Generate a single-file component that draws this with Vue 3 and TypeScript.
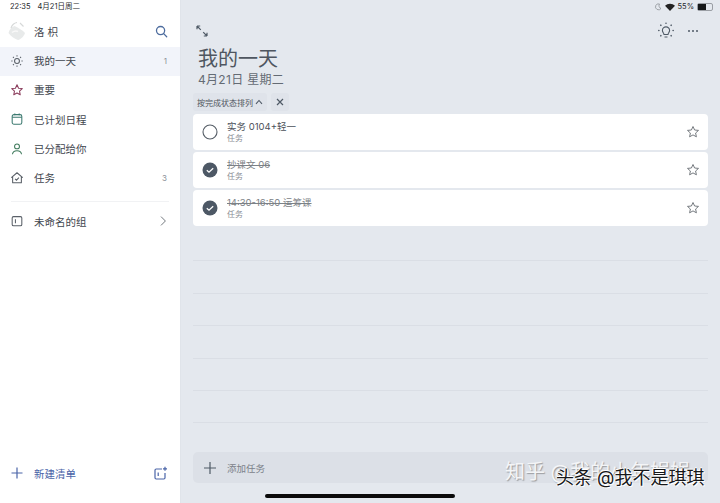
<template>
  <div class="page">
    <aside class="side">
      <div class="account">
        <svg class="avatar" width="20" height="22" viewBox="0 0 20 22" fill="none">
          <path d="M1.500 13c1-3.500 3-6 6-7 3 1.500 8 4 10.500 7-1 3-4 6.500-7 7-3-1-7-3.500-9.500-7z" fill="#e8eaea" />
          <path d="M4 8c1-3 3-5 6-5.500M13 3l3.500 3.500" stroke="#d6d8d8" stroke-width="1.100" />
          <path d="M5 12.500c2-1.500 4-2 6-1" stroke="#f8f8f8" stroke-width="1.500" />
        </svg>
        <span class="account-name">洛 枳</span>
        <svg class="search" width="13" height="13" viewBox="0 0 14 14" fill="none" stroke="#4d6c9e" stroke-width="1.400">
          <circle cx="6" cy="6" r="4.400" />
          <path d="M9.300 9.300 12.600 12.600" stroke-linecap="round" />
        </svg>
      </div>

      <div v-for="item in lists" :key="item.name" class="row" :class="{ active: item.active }">
        <svg class="row-icon" width="14" height="14" viewBox="0 0 16 16" fill="none" :stroke="item.color" stroke-width="1.200">
          <template v-if="item.icon === 'sun'">
            <circle cx="8" cy="8" r="2.800" />
            <path d="M8 1.500v1.400M8 13.100v1.400M1.500 8h1.400M13.100 8h1.400M3.400 3.400l1 1M11.600 11.600l1 1M3.400 12.600l1-1M11.600 4.400l1-1" />
          </template>
          <path v-else-if="item.icon === 'star'" d="M8 2l1.800 3.900 4.200.5-3.100 2.900.8 4.200L8 11.400l-3.700 2.100.8-4.200L2 6.400l4.200-.5z" stroke-linejoin="round" />
          <template v-else-if="item.icon === 'cal'">
            <rect x="2.500" y="3" width="11" height="11" rx="2" />
            <path d="M2.500 6h11M5.500 1.600v2M10.500 1.600v2" />
          </template>
          <template v-else-if="item.icon === 'user'">
            <circle cx="8" cy="5" r="2.800" />
            <path d="M2.800 14c.4-2.800 2.600-4 5.200-4s4.800 1.200 5.200 4" />
          </template>
          <template v-else>
            <path d="M1.500 7.500 8 2l6.500 5.500M3 6.500v7h10v-7" stroke-linejoin="round" />
            <path d="M5.800 9 7.400 10.500 10.200 7.700" />
          </template>
        </svg>
        <span class="row-name">{{ item.name }}</span>
        <span class="row-count">{{ item.count }}</span>
      </div>

      <div class="divider"></div>

      <div class="row">
        <svg class="row-icon" width="14" height="14" viewBox="0 0 16 16" fill="none" stroke="#5a6068" stroke-width="1.200">
          <rect x="2.500" y="3" width="11" height="10.500" rx="1.500" />
          <path d="M6.200 6v4.500" />
        </svg>
        <span class="row-name">未命名的组</span>
        <svg class="chevron" width="8" height="12" viewBox="0 0 10 14" fill="none" stroke="#6c7278" stroke-width="1.200">
          <path d="M2.500 1.500 8 7l-5.500 5.500" />
        </svg>
      </div>

      <div class="side-foot">
        <svg width="14" height="14" viewBox="0 0 14 14" stroke="#4a64a8" stroke-width="1.200">
          <path d="M7 1.500v11M1.500 7h11" />
        </svg>
        <span class="new-list">新建清单</span>
        <svg class="new-group" width="15" height="15" viewBox="0 0 15 15" fill="none" stroke="#4a64a8" stroke-width="1.200">
          <path d="M9 3H3.200A1.200 1.200 0 0 0 2 4.200v7.600A1.200 1.200 0 0 0 3.200 13h7.600a1.200 1.200 0 0 0 1.200-1.200V7" />
          <path d="M5.200 6.500v3.500M12 .8v4M10 2.800h4" />
        </svg>
      </div>
    </aside>

    <main class="main">
      <div class="toolbar">
        <svg width="14" height="14" viewBox="0 0 14 14" fill="none" stroke="#4f5a66" stroke-width="1.200">
          <path d="M2 2l3.800 3.800M2 2v3.200M2 2h3.200M12 12 8.200 8.200M12 12V8.800M12 12H8.800" />
        </svg>
        <svg class="bulb" width="20" height="20" viewBox="0 0 20 20" fill="none" stroke="#4f5a66" stroke-width="1.100">
          <path d="M8 13.500c0-1.500-1.600-2.200-1.600-4a3.600 3.600 0 0 1 7.200 0c0 1.800-1.600 2.500-1.600 4zM8.500 16h3" />
          <path d="M10 2.200v.1M4.800 4.200l.1.100M15.200 4.200l-.1.100M2.800 9.500h.1M17.200 9.500h-.1M4.800 14.800l.1-.1M15.200 14.800l-.1-.1" stroke-linecap="round" stroke-width="1.600" />
        </svg>
        <span class="more"><i></i><i></i><i></i></span>
      </div>

      <h1 class="title">我的一天</h1>
      <div class="date">4月21日 星期二</div>

      <div class="chips">
        <span class="chip">按完成状态排列
          <svg width="8" height="6" viewBox="0 0 8 6" fill="none" stroke="#4f5a66" stroke-width="1.100"><path d="M1 4.800 4 1.500l3 3.300" /></svg>
        </span>
        <span class="chip chip-x">
          <svg width="8" height="8" viewBox="0 0 8 8" stroke="#4f5a66" stroke-width="1.200"><path d="M1 1l6 6M7 1 1 7" /></svg>
        </span>
      </div>

      <div class="tasks">
        <div v-for="task in tasks" :key="task.name" class="task">
          <svg v-if="task.done" width="16" height="16" viewBox="0 0 16 16" fill="none">
            <circle cx="8" cy="8" r="7.500" fill="#4d5865" />
            <path d="M4.800 8.200 7 10.200l4.200-4" stroke="#fff" stroke-width="1.300" />
          </svg>
          <svg v-else width="16" height="16" viewBox="0 0 16 16" fill="none" stroke="#555d66" stroke-width="1.100">
            <circle cx="8" cy="8" r="7" />
          </svg>
          <div class="task-text">
            <div class="task-name" :class="{ done: task.done }">{{ task.name }}</div>
            <div class="task-sub">任务</div>
          </div>
          <svg class="task-star" width="14" height="14" viewBox="0 0 14 14" fill="none" stroke="#666c72" stroke-width=".9">
            <path d="M7 1.500l1.600 3.500 3.900.4-2.900 2.600.8 3.800L7 9.900l-3.400 1.900.8-3.800L1.500 5.400l3.900-.4z" stroke-linejoin="round" />
          </svg>
        </div>
      </div>

      <div class="rules">
        <div v-for="n in 6" :key="n" class="rule"></div>
      </div>

      <div class="add-task">
        <svg width="14" height="14" viewBox="0 0 14 14" stroke="#4f5a66" stroke-width="1.200">
          <path d="M7 1v12M1 7h12" />
        </svg>
        <span>添加任务</span>
      </div>
    </main>

    <div class="status">
      <span>22:35</span><span>4月21日周二</span>
      <span class="status-right">
        <svg width="8" height="8" viewBox="0 0 8 8" fill="none" stroke="#8c9096" stroke-width=".8"><path d="M5.500 1A3 3 0 1 0 7 5.500 3 3 0 0 1 5.500 1z" /></svg>
        <svg width="10" height="8" viewBox="0 0 10 8" fill="#222"><path d="M0 2.800a7 7 0 0 1 10 0L5 8z" /></svg>
        <span>55%</span>
        <span class="battery"><i></i></span>
      </span>
    </div>

    <div class="home-bar"></div>
    <div class="mark-zhihu">知乎 @我的小年娟娟</div>
    <div class="mark-toutiao">头条 @我不是琪琪</div>
  </div>
</template>

<script setup lang="ts">
const lists = [
  { name: '我的一天', icon: 'sun', color: '#5a6068', count: '1', active: true },
  { name: '重要', icon: 'star', color: '#8c3f5e', count: '' },
  { name: '已计划日程', icon: 'cal', color: '#3d7a70', count: '' },
  { name: '已分配给你', icon: 'user', color: '#3f7a5c', count: '' },
  { name: '任务', icon: 'home', color: '#5a6068', count: '3' },
]

const tasks = [
  { name: '实务 0104+轻一', done: false },
  { name: '抄课文 06', done: true },
  { name: '14:30-16:50 运筹课', done: true },
]
</script>

<style>
html, body { margin: 0; height: 100%; overflow: hidden; }
</style>

<style scoped>
.page {
  position: relative;
  display: flex;
  width: 720px;
  height: 503px;
  overflow: hidden;
  font-family: Inter, "Noto Sans CJK SC", sans-serif;
  color: #3f464e;
}
.side {
  width: 181px;
  height: 503px;
  box-sizing: border-box;
  padding-top: 16px;
  background: #fff;
  border-right: 1px solid #e0e4ea;
  display: flex;
  flex-direction: column;
}
.account {
  height: 31px;
  display: flex;
  align-items: center;
  padding: 0 12px 1px 7px;
  box-sizing: border-box;
}
.account-name { margin-left: 7px; font-size: 10.500px; }
.search { margin-left: auto; }
.row {
  height: 29.300px;
  flex: none;
  box-sizing: border-box;
  display: flex;
  align-items: center;
  padding: 0 13px 2px 10px;
}
.row.active { background: #f2f4fa; }
.row-name { margin-left: 10px; font-size: 10.500px; }
.row-count { margin-left: auto; font-size: 8px; color: #8d9298; }
.chevron { margin-left: auto; }
.divider {
  height: 1px;
  margin: 8px 11px 5px;
  background: #f1f2f4;
}
.side-foot {
  margin-top: auto;
  height: 58px;
  box-sizing: border-box;
  padding: 0 12px 2px 10px;
  display: flex;
  align-items: center;
}
.new-list { margin-left: 10px; font-size: 10.500px; color: #4a64a8; }
.new-group { margin-left: auto; }
.main {
  flex: 1;
  height: 503px;
  box-sizing: border-box;
  padding: 21px 12px 0;
  background: #e4e8ee;
  display: flex;
  flex-direction: column;
}
.toolbar {
  height: 20px;
  display: flex;
  align-items: center;
  padding-left: 2px;
}
.bulb { margin-left: auto; }
.more { display: flex; gap: 1.500px; margin: 0 10px 0 12px; }
.more i { width: 2.500px; height: 2.500px; border-radius: 50%; background: #4f5a66; }
.title {
  margin: 5px 0 0 5px;
  font-size: 20px;
  line-height: 26px;
  font-weight: 400;
  color: #4f5660;
}
.date {
  margin: 0 0 0 5px;
  font-size: 12px;
  line-height: 16px;
  letter-spacing: .3px;
  color: #646b74;
}
.chips { display: flex; gap: 4px; margin-top: 5px; }
.chip {
  height: 18px;
  display: flex;
  align-items: center;
  gap: 2px;
  padding: 0 4px;
  border-radius: 3px;
  background: #dfe3ea;
  font-size: 8px;
  color: #4f5660;
}
.chip-x { width: 18px; box-sizing: border-box; justify-content: center; padding: 0; }
.tasks { display: flex; flex-direction: column; gap: 2px; margin-top: 3px; }
.task {
  height: 36px;
  display: flex;
  align-items: center;
  padding: 0 8px 0 9px;
  background: #fff;
  border-radius: 4px;
}
.task-text { margin-left: 9px; }
.task-name { font-size: 9.500px; line-height: 12px; color: #4b5159; }
.task-name.done { color: #7c8186; text-decoration: line-through; }
.task-sub { font-size: 8px; line-height: 11px; color: #888d93; }
.task-star { margin-left: auto; }
.rules { margin-top: 3px; }
.rule { height: 32.400px; box-sizing: border-box; border-bottom: 1px solid #dadee5; }
.add-task {
  margin-top: auto;
  margin-bottom: 20px;
  height: 31px;
  display: flex;
  align-items: center;
  gap: 10px;
  padding-left: 10px;
  border-radius: 5px;
  background: #dce0e7;
  font-size: 9.500px;
  color: #7b8189;
}
.status {
  position: absolute;
  top: 2px;
  left: 10px;
  right: 7px;
  display: flex;
  align-items: center;
  gap: 7px;
  font-size: 7.500px;
  line-height: 9px;
  color: #26292d;
}
.status-right { margin-left: auto; display: flex; align-items: center; gap: 3px; }
.battery {
  width: 14px;
  height: 6px;
  border: 1px solid #9a9ea4;
  border-radius: 2px;
  display: block;
}
.battery i { display: block; width: 8px; height: 6px; background: #16181a; }
.home-bar {
  position: absolute;
  left: 265px;
  bottom: 5px;
  width: 190px;
  height: 4px;
  border-radius: 2px;
  background: #0a0a0a;
}
.mark-zhihu {
  position: absolute;
  left: 505px;
  top: 460px;
  font-size: 20px;
  line-height: 24px;
  color: #f4f5f7;
  text-shadow: 1px 1px 1px rgba(90, 90, 90, .5);
  white-space: nowrap;
}
.mark-toutiao {
  position: absolute;
  left: 556px;
  top: 467px;
  font-size: 18px;
  line-height: 22px;
  color: #17181a;
  text-shadow: 1px 1px 0 #fff, -1px 0 0 #fff, 0 -1px 0 #fff;
  white-space: nowrap;
}
</style>
